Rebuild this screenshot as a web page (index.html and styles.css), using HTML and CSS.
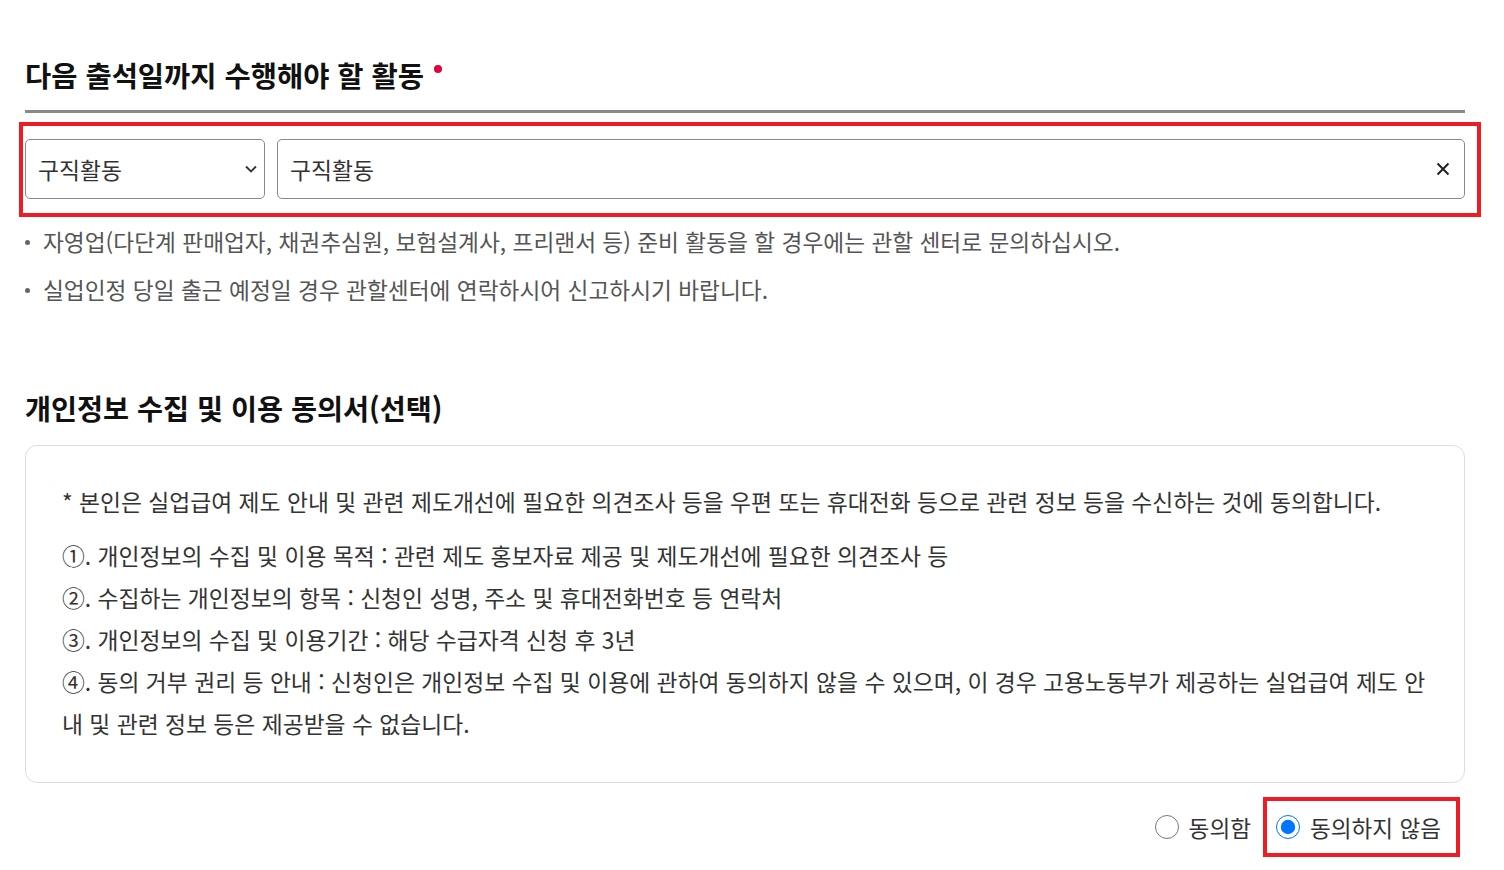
FILE: index.html
```html
<!DOCTYPE html>
<html lang="ko">
<head>
  <meta charset="UTF-8">
  <meta name="viewport" content="width=device-width, initial-scale=1.0">
  <title>실업인정 신청</title>
  <link rel="stylesheet" href="styles.css">
</head>
<body>
  <div class="container">
    <h3 class="section-title">다음 출석일까지 수행해야 할 활동<span class="required"></span></h3>

    <div class="highlight activity-row">
      <div class="select-box">
        <span>구직활동</span>
        <svg class="chevron" width="12" height="8" viewBox="0 0 12 8"><path d="M1 1.5l5 5 5-5" fill="none" stroke="#333" stroke-width="1.8"/></svg>
      </div>
      <div class="input-box">
        <span>구직활동</span>
        <svg class="clear" width="14" height="14" viewBox="0 0 14 14"><path d="M1.5 1.5l11 11M12.5 1.5l-11 11" stroke="#222" stroke-width="2"/></svg>
      </div>
    </div>

    <ul class="notice-list">
      <li>자영업(다단계 판매업자, 채권추심원, 보험설계사, 프리랜서 등) 준비 활동을 할 경우에는 관할 센터로 문의하십시오.</li>
      <li>실업인정 당일 출근 예정일 경우 관할센터에 연락하시어 신고하시기 바랍니다.</li>
    </ul>

    <h3 class="section-title plain">개인정보 수집 및 이용 동의서(선택)</h3>

    <div class="agree-box">
      <p class="lead">* 본인은 실업급여 제도 안내 및 관련 제도개선에 필요한 의견조사 등을 우편 또는 휴대전화 등으로 관련 정보 등을 수신하는 것에 동의합니다.</p>
      <p>①. 개인정보의 수집 및 이용 목적 : 관련 제도 홍보자료 제공 및 제도개선에 필요한 의견조사 등</p>
      <p>②. 수집하는 개인정보의 항목 : 신청인 성명, 주소 및 휴대전화번호 등 연락처</p>
      <p>③. 개인정보의 수집 및 이용기간 : 해당 수급자격 신청 후 3년</p>
      <p>④. 동의 거부 권리 등 안내 : 신청인은 개인정보 수집 및 이용에 관하여 동의하지 않을 수 있으며, 이 경우 고용노동부가 제공하는 실업급여 제도 안내 및 관련 정보 등은 제공받을 수 없습니다.</p>
    </div>

    <div class="agree-row">
      <label class="radio"><input type="radio" name="agree" value="Y"> 동의함</label>
      <label class="radio highlight-radio"><input type="radio" name="agree" value="N" checked> 동의하지 않음</label>
    </div>
  </div>
</body>
</html>
```

FILE: styles.css
```css
body {
  margin: 0;
  padding: 0;
  background-color: #fff;
  font-family: "Noto Sans CJK KR", "Noto Sans", sans-serif;
  color: #333;
}

.container {
  width: 1440px;
  padding: 57px 0 0 25px;
}

.section-title {
  margin: 0;
  font-size: 28.5px;
  line-height: 36px;
  font-weight: 700;
  color: #111;
  padding-bottom: 17px;
  border-bottom: 3px solid #888;
}

.section-title.plain {
  font-size: 28.3px;
  border-bottom: none;
  padding-bottom: 0;
  margin-top: 76px;
}

.required {
  display: inline-block;
  width: 8px;
  height: 8px;
  border-radius: 50%;
  background-color: #e2003d;
  vertical-align: top;
  margin: 8px 0 0 10px;
}

.highlight {
  border: 4px solid #ee1c25;
}

.activity-row {
  display: flex;
  gap: 12px;
  margin: 9px -16px 0 -6px;
  padding: 13px 12px 14px 2px;
}

.select-box,
.input-box {
  height: 60px;
  box-sizing: border-box;
  border: 1px solid #888;
  border-radius: 5px;
  padding: 0 14px 0 12px;
  display: flex;
  align-items: center;
  justify-content: space-between;
  font-size: 22.8px;
  color: #333;
}

.select-box {
  width: 240px;
  padding-right: 7px;
}

.input-box {
  flex: 1;
}

.notice-list {
  list-style: none;
  margin: 1px 0 0;
  padding: 0;
}

.notice-list li {
  position: relative;
  padding-left: 18px;
  font-size: 22.7px;
  line-height: 48px;
  color: #555;
}

.notice-list li::before {
  content: "";
  position: absolute;
  left: 0;
  top: 22px;
  width: 5px;
  height: 5px;
  border-radius: 50%;
  background-color: #666;
}

.agree-box {
  margin-top: 19px;
  border: 1px solid #ddd;
  border-radius: 12px;
  padding: 35px 36px 37px;
  font-size: 22.8px;
  line-height: 42px;
  color: #333;
}

.agree-box p {
  margin: 0;
}

.agree-box .lead {
  margin-bottom: 12px;
}

.agree-row {
  display: flex;
  justify-content: flex-end;
  align-items: center;
  gap: 12px;
  margin-top: 14px;
  margin-right: 5px;
}

.radio {
  display: flex;
  align-items: center;
  gap: 10px;
  font-size: 22.6px;
  color: #333;
}

.radio input {
  width: 24px;
  height: 24px;
  margin: 0;
}

.highlight-radio {
  border: 4px solid #ee1c25;
  height: 60px;
  box-sizing: border-box;
  padding: 0 15px 0 9px;
}
```
